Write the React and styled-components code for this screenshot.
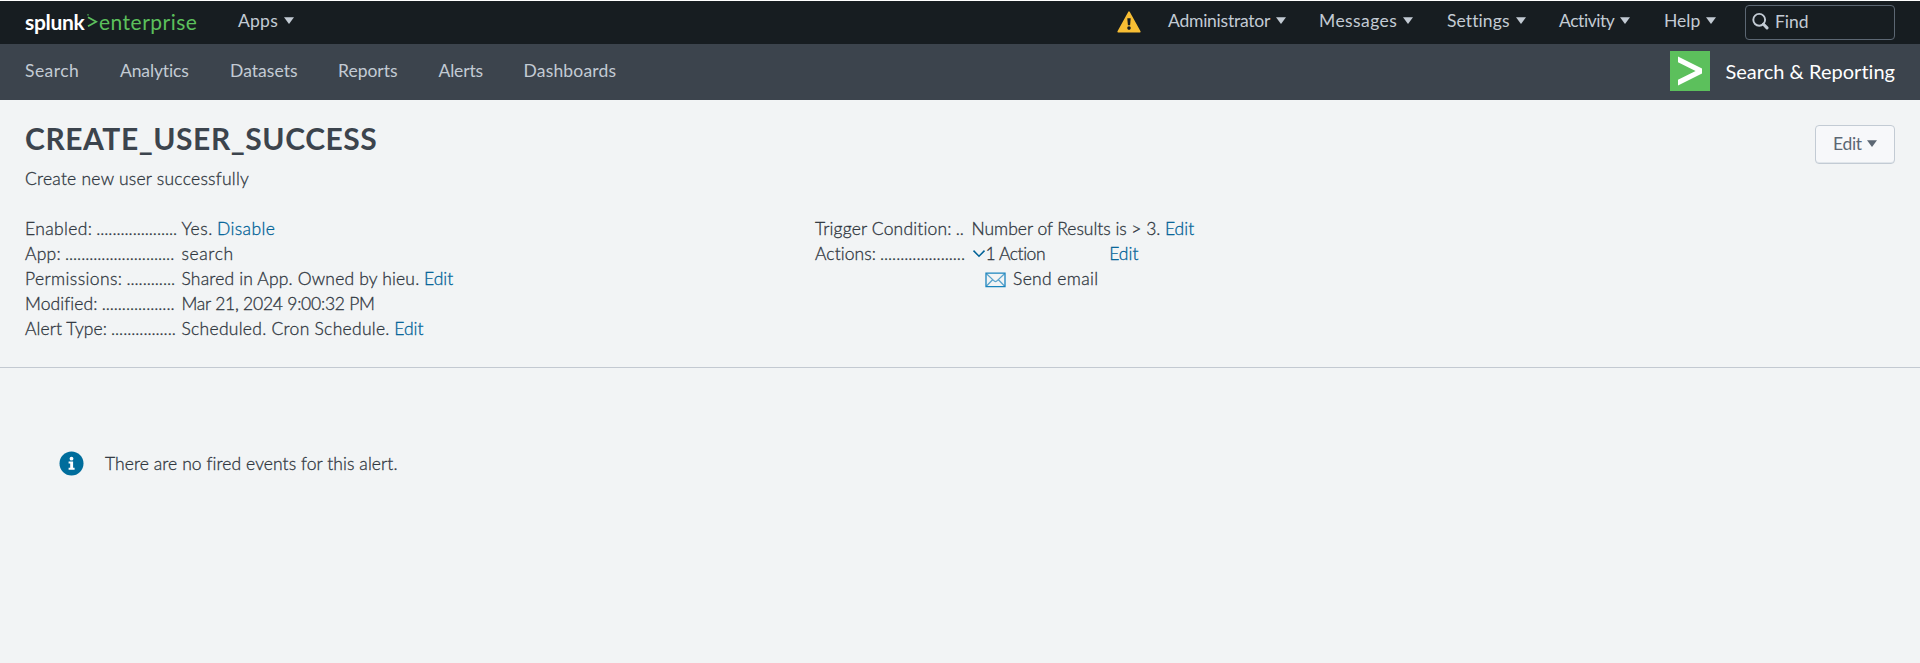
import React from 'react';
import styled, { createGlobalStyle } from 'styled-components';

const GlobalStyle = createGlobalStyle`
  * { box-sizing: border-box; }
  body {
    margin: 0;
    background: #f2f4f5;
    color: #3c444d;
    font-family: Lato, "Open Sans", sans-serif;
    font-size: 17.5px;
    line-height: 25px;
  }
`;

const Page = styled.div`
  min-height: 663px;
  border-top: 1px solid #fff;
`;

const Tracked = styled.span`
  letter-spacing: ${(p) => p.$ls || 0}px;
  white-space: pre;
`;

const TopBar = styled.header`
  display: flex;
  align-items: center;
  height: 43px;
  padding: 0 25px;
  background: #171d21;
  color: #c3cbd4;
`;

const Brand = styled.div`
  display: flex;
  align-items: baseline;
  width: 213px;
  padding-bottom: 3px;
  font-size: 21px;
  color: #5cc05c;
`;

const BrandName = styled(Tracked)`
  width: 62px;
  font-weight: 700;
  color: #fff;
`;

const BrandMark = styled.svg`
  width: 11px;
  height: 16px;
  margin-right: 1px;
  align-self: center;
`;

const MenuItem = styled.div`
  display: flex;
  align-items: center;
  gap: 6px;
  width: ${(p) => p.$w}px;
  padding-bottom: 4px;
`;

const CaretSvg = styled.svg`
  width: 10px;
  height: 7px;
  flex: none;
`;

const Caret = () => (
  <CaretSvg viewBox="0 0 10 7">
    <path d="M0 0.3H10L5 7Z" fill="currentColor" />
  </CaretSvg>
);

const TopRight = styled.div`
  display: flex;
  align-items: center;
  margin-left: auto;
`;

const Warning = styled.svg`
  width: 24px;
  height: 22px;
  margin-right: 27px;
  margin-bottom: 1px;
`;

const FindBox = styled.div`
  display: flex;
  align-items: center;
  width: 150px;
  height: 35px;
  padding: 0 0 3px 6px;
  border: 1px solid #5c6773;
  border-radius: 4px;
`;

const FindIcon = styled.svg`
  width: 17px;
  height: 18px;
  margin-right: 6px;
`;

const NavBar = styled.nav`
  display: flex;
  align-items: center;
  height: 56px;
  padding: 0 25px;
  background: #3c444d;
  color: #c3cbd4;
`;

const NavItem = styled.div`
  width: ${(p) => p.$w}px;
  padding-bottom: 4px;
`;

const AppTitle = styled.div`
  display: flex;
  align-items: center;
  gap: 15px;
  margin-left: auto;
  padding-bottom: 2px;
  font-size: 20px;
  color: #fff;
`;

const AppIcon = styled.svg`
  width: 40px;
  height: 40px;
`;

const Header = styled.section`
  display: flex;
  justify-content: space-between;
  height: 116px;
  padding: 25px 25px 0;
`;

const Title = styled.h1`
  margin: -4px 0 0;
  font-size: 30px;
  font-weight: 700;
  line-height: 34px;
`;

const Description = styled.p`
  margin: 11px 0 0;
  font-weight: 300;
  color: #30373f;
  -webkit-text-stroke: 0.3px;
`;

const EditButton = styled.button`
  display: flex;
  align-items: center;
  gap: 5px;
  width: 80px;
  height: 39px;
  padding: 0 0 3px 17px;
  border: 1px solid #c3cbd4;
  border-radius: 4px;
  background: #f7f8fa;
  box-shadow: inset 0 -1px 0 #e1e6eb;
  color: #5c6773;
  font: inherit;
`;

const Details = styled.section`
  display: grid;
  grid-template-columns: 790px 1fr;
  height: 152px;
  padding: 0 25px;
  border-bottom: 1px solid #c3c9d1;
  font-weight: 300;
  color: #30373f;
  -webkit-text-stroke: 0.3px;
`;

const Row = styled.div`
  display: flex;
  height: 25px;
`;

const Label = styled.div`
  display: flex;
  gap: 4px;
  width: 156.5px;
`;

const Value = styled.div`
  display: flex;
  align-items: center;
`;

const Link = styled(Tracked)`
  margin-left: ${(p) => p.$gap ?? 5}px;
  color: #006297;
`;

const ChevronSvg = styled.svg`
  width: 14px;
  height: 9px;
`;

const ActionItem = styled.div`
  display: flex;
  align-items: center;
  height: 25px;
  padding-left: 170px;
`;

const MailIcon = styled.svg`
  width: 21px;
  height: 16px;
  margin-right: 7px;
  margin-top: 2px;
`;

const Notice = styled.section`
  display: flex;
  align-items: center;
  gap: 21.5px;
  padding: 83px 0 0 58.5px;
  font-weight: 300;
  color: #30373f;
  -webkit-text-stroke: 0.3px;
`;

const InfoIcon = styled.svg`
  width: 25px;
  height: 25px;
  -webkit-text-stroke: 0;
`;

const navItems = [
  ['Search', 95, 0.45],
  ['Analytics', 110, -0.13],
  ['Datasets', 108, 0.05],
  ['Reports', 100.5, 0],
  ['Alerts', 85, -0.16],
  ['Dashboards', 100, 0.18],
];

const menus = [
  ['Administrator', 151, -0.24],
  ['Messages', 128, 0.42],
  ['Settings', 112, 0.1],
  ['Activity', 105, -0.45],
  ['Help', 81, 0.01],
];

const Field = ({ label, ls, dots, children }) => (
  <Row>
    <Label>
      <Tracked $ls={ls}>{label}</Tracked>
      <Tracked $ls={-0.04}>{'.'.repeat(dots)}</Tracked>
    </Label>
    <Value>{children}</Value>
  </Row>
);

export default function App() {
  return (
    <Page>
      <GlobalStyle />
      <TopBar>
        <Brand>
          <BrandName $ls={-0.3}>splunk</BrandName>
          <BrandMark viewBox="0 0 11 16">
            <path d="M1 4.2L9.2 8.7L1 13.2" fill="none" stroke="currentColor" strokeWidth="1.8" />
            <path d="M1 1.2V2.4" stroke="currentColor" strokeWidth="1.4" />
          </BrandMark>
          <Tracked $ls={0.48}>enterprise</Tracked>
        </Brand>
        <MenuItem $w={70}>
          <Tracked $ls={0.25}>Apps</Tracked>
          <Caret />
        </MenuItem>
        <TopRight>
          <Warning viewBox="0 0 24 22">
            <path d="M12 1.2L22.8 20.7H1.2Z" fill="#f8be34" stroke="#f8be34" strokeWidth="1.6" strokeLinejoin="round" />
            <path d="M10.3 7.2H13.7L13.1 14.2H10.9Z" fill="#171d21" />
            <circle cx="12" cy="17.1" r="1.8" fill="#171d21" />
          </Warning>
          {menus.map(([name, w, ls]) => (
            <MenuItem key={name} $w={w}>
              <Tracked $ls={ls}>{name}</Tracked>
              <Caret />
            </MenuItem>
          ))}
          <FindBox>
            <FindIcon viewBox="0 0 17 18">
              <circle cx="7.2" cy="7.8" r="5.9" fill="none" stroke="currentColor" strokeWidth="1.9" />
              <path d="M11.5 12.2L15 15.9" stroke="currentColor" strokeWidth="3" strokeLinecap="round" />
            </FindIcon>
            <Tracked>Find</Tracked>
          </FindBox>
        </TopRight>
      </TopBar>

      <NavBar>
        {navItems.map(([name, w, ls]) => (
          <NavItem key={name} $w={w}>
            <Tracked $ls={ls}>{name}</Tracked>
          </NavItem>
        ))}
        <AppTitle>
          <AppIcon viewBox="0 0 40 40">
            <path d="M0 0H40V40H0Z" fill="#5cc05c" />
            <path d="M8 5.6L32 17.4V22.6L8 34.4V28.8L25.6 20L8 11.2Z" fill="#fff" />
          </AppIcon>
          <Tracked $ls={0.02}>Search & Reporting</Tracked>
        </AppTitle>
      </NavBar>

      <Header>
        <div>
          <Title>
            <Tracked $ls={0.56}>CREATE_USER_SUCCESS</Tracked>
          </Title>
          <Description>
            <Tracked $ls={0.24}>Create new user successfully</Tracked>
          </Description>
        </div>
        <EditButton>
          <Tracked $ls={-0.3}>Edit</Tracked>
          <Caret />
        </EditButton>
      </Header>

      <Details>
        <div>
          <Field label="Enabled:" ls={0.35} dots={20}>
            <Tracked $ls={0.55}>Yes.</Tracked>
            <Link $ls={0.4} $gap={4}>Disable</Link>
          </Field>
          <Field label="App:" ls={0.26} dots={27}>
            <Tracked $ls={0.6}>search</Tracked>
          </Field>
          <Field label="Permissions:" ls={0.4} dots={12}>
            <Tracked $ls={0.17}>Shared in App. Owned by hieu.</Tracked>
            <Link $gap={4.5}>Edit</Link>
          </Field>
          <Field label="Modified:" ls={0.1} dots={18}>
            <Tracked $ls={-0.24}>Mar 21, 2024 9:00:32 PM</Tracked>
          </Field>
          <Field label="Alert Type:" ls={0.08} dots={16}>
            <Tracked $ls={0.28}>Scheduled. Cron Schedule.</Tracked>
            <Link $gap={4.5}>Edit</Link>
          </Field>
        </div>
        <div>
          <Field label="Trigger Condition:" ls={0.17} dots={2}>
            <Tracked $ls={-0.03}>Number of Results is &gt; 3.</Tracked>
            <Link $gap={4.5}>Edit</Link>
          </Field>
          <Field label="Actions:" ls={0.07} dots={21}>
            <ChevronSvg viewBox="0 0 14 9">
              <path d="M1.5 1.6L7 7.2L12.5 1.6" fill="none" stroke="#006297" strokeWidth="1.5" />
            </ChevronSvg>
            <Tracked $ls={-0.43}>1 Action</Tracked>
            <Link $gap={64}>Edit</Link>
          </Field>
          <ActionItem>
            <MailIcon viewBox="0 0 21 16">
              <g fill="none" stroke="#5ba3cb" strokeWidth="1.3">
                <path d="M1.5 1.8L9.3 9.1Q10.5 10 11.7 9.1L19.5 1.8M1.5 14L7.6 7.7M19.5 14L13.4 7.7" />
                <path d="M1 1.2H20V14.6H1Z" stroke="#1a84bd" />
              </g>
            </MailIcon>
            <Tracked $ls={0.36}>Send email</Tracked>
          </ActionItem>
        </div>
      </Details>

      <Notice>
        <InfoIcon viewBox="0 0 25 25">
          <circle cx="12.5" cy="12.5" r="12" fill="#006d9c" />
          <circle cx="12.5" cy="7.7" r="1.9" fill="#fff" />
          <path d="M9.6 10.6H14.1V16.8H15.6V18.7H9.6V16.8H11.2V12.4H9.6Z" fill="#fff" />
        </InfoIcon>
        <Tracked $ls={0.08}>There are no fired events for this alert.</Tracked>
      </Notice>
    </Page>
  );
}
